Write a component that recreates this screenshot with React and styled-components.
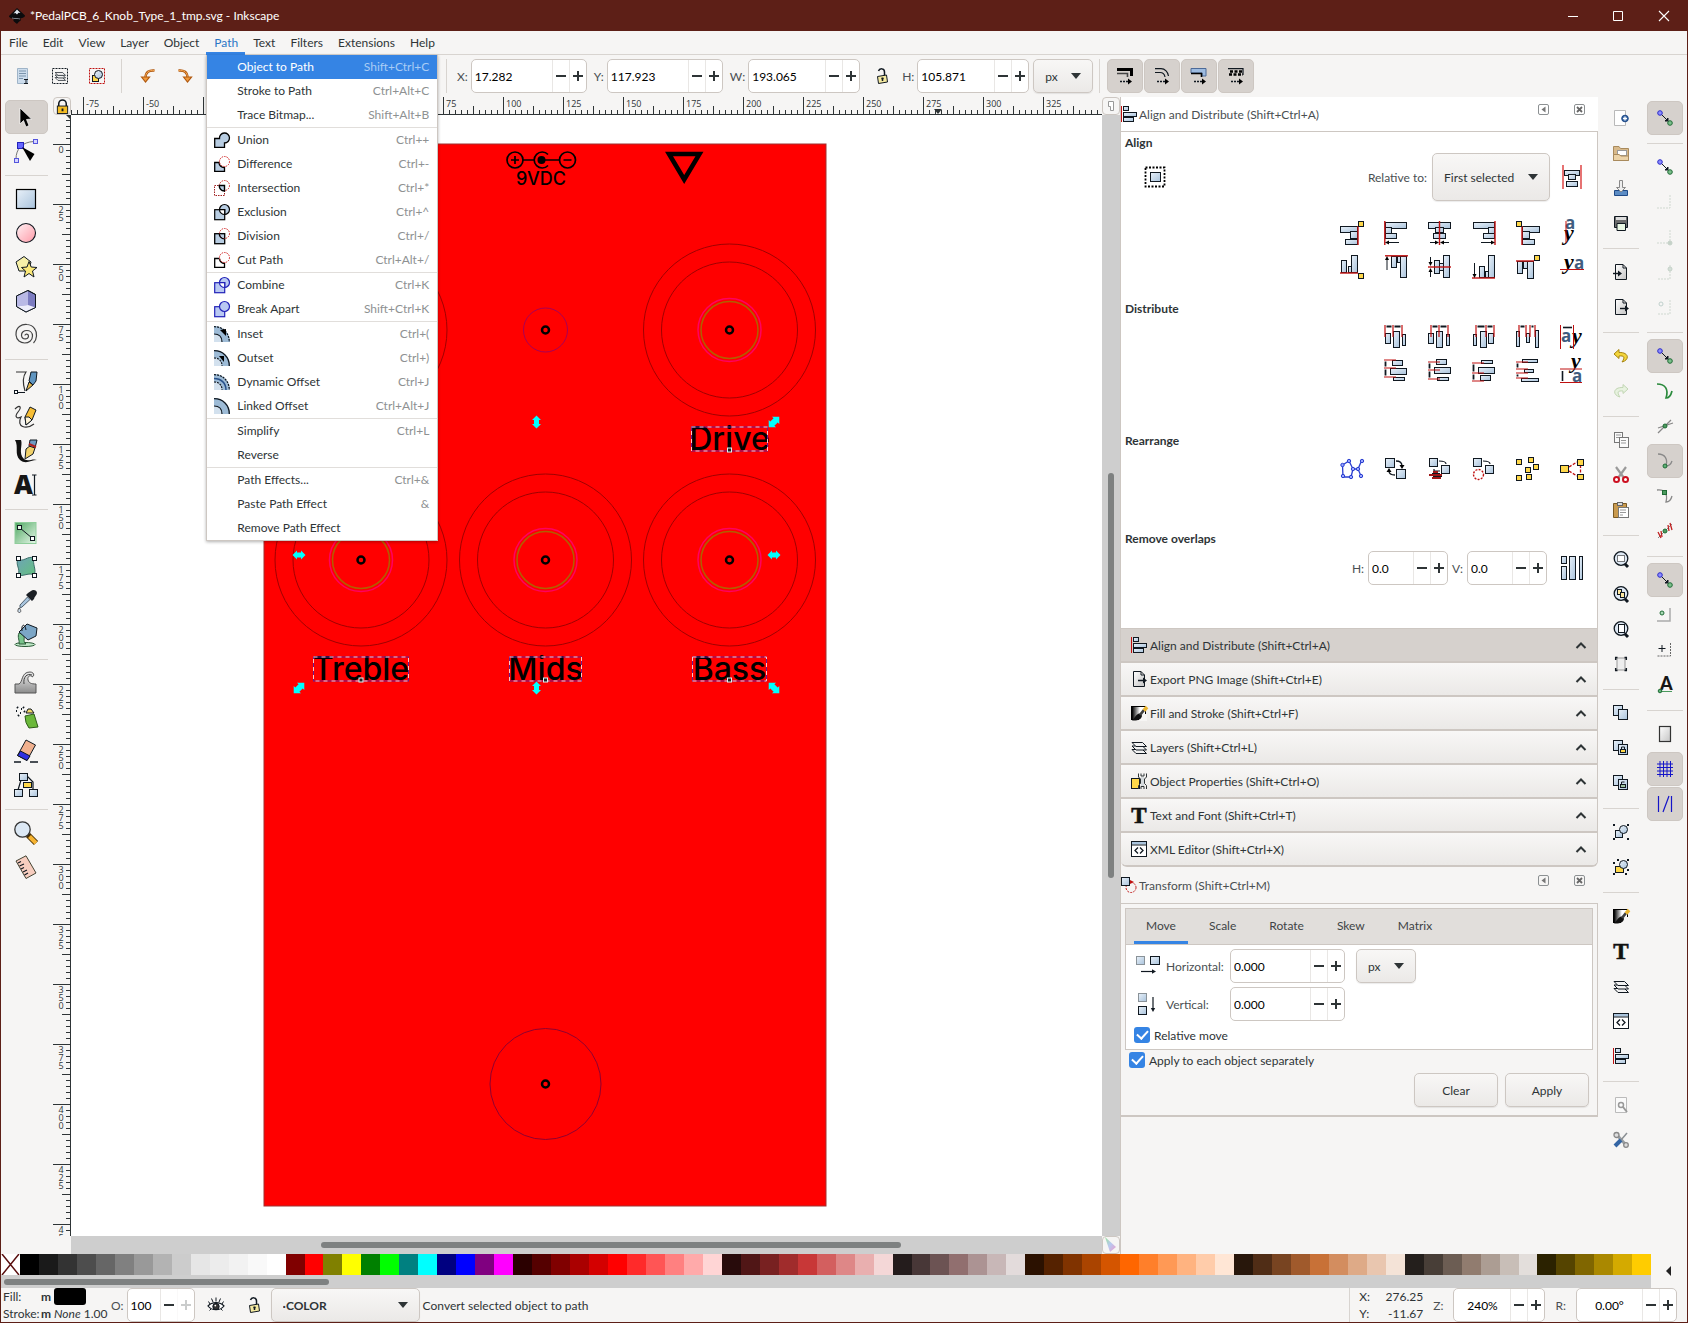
import React from "react";
import styled, { createGlobalStyle, css } from "styled-components";

const c = {
  frame: "#5d1f17",
  bg: "#f6f5f4",
  line: "#d8d4d0",
  edge: "#cdc7c2",
  text: "#2e3436",
  pressed: "#d6d1cd",
  trough: "#cecece",
  thumb: "#7e8181",
  accent: "#3584e4",
};

const Global = createGlobalStyle`
  * { box-sizing: border-box; }
  body { margin: 0; background: ${c.bg}; }
  body, button, input, select {
    font-family: Lato, "Open Sans", sans-serif;
    font-size: 12px;
    color: ${c.text};
  }
  button, input, select { margin: 0; }
  button { padding: 0; border: 0; background: none; }
  svg { display: block; flex: none; }
`;

/* ---------- drawing helpers ---------- */

const INK = "#101820";
const RED = "#c01010";
const BLUE = "#b8cde2";
const YEL = "#ffd84a";

const R = ({ x, y, w, h, f = "url(#blue)", s = INK, sw = 1 }) => (
  <rect x={x + 0.5} y={y + 0.5} width={w - 1} height={h - 1} fill={f} stroke={s} strokeWidth={sw} />
);
const P = ({ d, s = INK, f = "none", w = 1, ...rest }) => (
  <path d={d} stroke={s} fill={f} strokeWidth={w} {...rest} />
);
const C = ({ x, y, r, f = "none", s = INK, w = 1, ...rest }) => (
  <circle cx={x} cy={y} r={r} fill={f} stroke={s} strokeWidth={w} {...rest} />
);

const Defs = () => (
  <HiddenDefs width="0" height="0" aria-hidden="true">
    <defs>
      <linearGradient id="blue" x1="0" y1="0" x2="1" y2="1">
        <stop offset="0" stopColor="#e9f1f9" />
        <stop offset="1" stopColor="#a9c3dc" />
      </linearGradient>
      <linearGradient id="pink" x1="0" y1="0" x2="1" y2="1">
        <stop offset="0" stopColor="#fff2f4" />
        <stop offset="1" stopColor="#ff9aa8" />
      </linearGradient>
      <linearGradient id="green" x1="0" y1="0" x2="1" y2="1">
        <stop offset="0" stopColor="#4fa862" />
        <stop offset="1" stopColor="#e8f8ea" />
      </linearGradient>
      <linearGradient id="grey" x1="0" y1="0" x2="1" y2="1">
        <stop offset="0" stopColor="#ffffff" />
        <stop offset="1" stopColor="#c4c4c4" />
      </linearGradient>
      <linearGradient id="dark" x1="0" y1="0" x2="0" y2="1">
        <stop offset="0" stopColor="#ededed" />
        <stop offset="1" stopColor="#8c8c8c" />
      </linearGradient>
      <linearGradient id="ink" x1="0" y1="0" x2="1" y2="0">
        <stop offset="0.05" stopColor="#000000" />
        <stop offset="0.6" stopColor="#ffffff" />
      </linearGradient>
      <linearGradient id="mesh" x1="0" y1="0" x2="1" y2="1">
        <stop offset="0" stopColor="#6fa3b8" />
        <stop offset="1" stopColor="#63c07f" />
      </linearGradient>
      <linearGradient id="gamut" x1="0" y1="0" x2="1" y2="1">
        <stop offset="0" stopColor="#9be29b" />
        <stop offset="0.5" stopColor="#b9c8f0" />
        <stop offset="1" stopColor="#f09ac8" />
      </linearGradient>
    </defs>
  </HiddenDefs>
);

const HiddenDefs = styled.svg`
  position: absolute;
`;

const snapNodes = (
  <>
    <P d="M4 4 L12 12" />
    <P d="M11 8 V11 H8 Z" f={INK} />
    <C x={3} y={3} r={2.3} f="#8d8dff" s="#2a2ac8" />
    <C x={13} y={13} r={2.3} f="#7cc08c" s="#1f6b35" />
  </>
);
const page = <P d="M2.5 .5 H10 L13.5 4 V15.5 H2.5 Z M10 .5 V4 H13.5" f="url(#grey)" />;
const pageSmall = (x, y, f = "url(#blue)") => <R x={x} y={y} w={10} h={11} f={f} />;
const magnifier = (
  <>
    <P d="M11 12 L15 16" w={3} />
    <C x={8} y={7.5} r={6.8} f="#dfe9f4" w={1.3} />
  </>
);
const fillStroke = (
  <>
    <rect x=".5" y="1.500" width="14" height="13" fill="url(#ink)" stroke="#000" />
    <rect x="8" y="9" width="8" height="7" fill="#f6f5f4" />
    <P d="M1 15.500 C4 13 5 9 8.500 8.500 L11 10.500 C11 14 7 16 1 15.500 Z" s="none" f="#111" />
    <P d="M9 10 L13 5" w={2.800} s="#3f3f3f" />
    <P d="M13 5.500 L16 2" w={3.500} s="#eab530" />
  </>
);
const layers = (
  <>
    <P d="M1 10.5 L5 14.5 H15.5 L11.5 10.5 Z" f="#f2f2f2" />
    <P d="M1 7 L5 11 H15.5 L11.5 7 Z" f="#f2f2f2" />
    <P d="M1 3.5 L5 7.5 H15.5 L11.5 3.5 Z" f="#f2f2f2" />
  </>
);
const xml = (
  <>
    <R x={0} y={0} w={16} h={16} f="#fff" />
    <rect x={1} y={1} width={14} height={2.5} fill="#a9c3dc" />
    <P d="M0 4 H16" />
    <P d="M7 6.5 L4 9.5 L7 12.5 M9 6.5 L12 9.5 L9 12.5" w={1.3} />
  </>
);
const letterT = (
  <text x="8" y="15.5" textAnchor="middle" fontFamily="Liberation Serif, serif" fontWeight="700" fontSize="23" fill="#111" stroke="#111" strokeWidth=".6">T</text>
);
const alignLeft = (
  <>
    <P d="M.5 0 V16" s={RED} />
    <R x={2} y={0} w={6} h={5} />
    <R x={2} y={6} w={14} h={5} />
    <R x={2} y={11} w={11} h={5} />
  </>
);
const transform = (
  <>
    <C x={10} y={10.5} r={5} s={RED} strokeDasharray="2 1.2" />
    <R x={0} y={0} w={9} h={9} />
    <P d="M9 3 L13 5 L9 7 Z" s="none" f={RED} />
  </>
);
const exportPage = (
  <>
    {page}
    <P d="M7 9.5 H13" w={1.4} />
    <P d="M12 6.5 L16 9.5 L12 12.5 Z" f={INK} s="none" />
  </>
);
const circleDots = { s: "#d02020", strokeDasharray: "1.5 1" };
const quarter = (inner, dash) => (
  <>
    <P d="M0 0 C9 0 16 7 16 16 H8 C8 11 5 8 0 8 Z" s="none" f="#9dbbd6" />
    <P d="M0 8 C5 8 8 11 8 16 H0 Z" s="none" f="#d3e1ee" />
    <P d="M0 .7 C9 .7 15.3 7 15.3 16" w={1.3} {...(dash ? { strokeDasharray: "2 1" } : {})} />
    <P d="M0 8 C5 8 8 11 8 16" w={1.2} {...(inner ? { strokeDasharray: "2 1" } : {})} />
  </>
);

/* name: [viewBox size, drawing] */
const icons = {
  logo: [16, <><P d="M8 0 L16 7.5 C16 10 12 9.5 11 11 C14 12 10 13 8 16 C6 14 3 13 5 11.5 C3 10 0 10 0 8 Z" s="none" f="#0b0b0d" /><P d="M8 1.5 L11.5 5 L9.5 4.8 L8 6.5 L6.5 5 L4.5 5.5 Z" s="none" f="#dfe6ee" /><P d="M3 10 C5 11 9 10 11 11" s="#7a8088" /></>],
  min: [10, <P d="M0 5.5 H10" s="#fff" />],
  max: [10, <P d="M.5 .5 H9.5 V9.5 H.5 Z" s="#fff" />],
  close: [10, <P d="M0 0 L10 10 M10 0 L0 10" s="#fff" w={1.1} />],

  selectAll: [16, <><P d="M2.5 .5 H12.5 V15.5 H2.5 Z" f="#cddded" s="#9fb4c8" /><P d="M4 3 H11 M4 5.5 H11 M4 8 H11 M4 10.5 H8" s="#7b94ac" /><P d="M9 11.5 H13 M11 11.5 V16 M9 15.5 H13" /></>],
  selectLayers: [16, <><rect x=".5" y=".5" width="15" height="15" fill="none" stroke={INK} strokeDasharray="2 1" /><g transform="translate(2.4 2) scale(.72)">{layers}</g></>],
  deselect: [16, <><rect x=".5" y=".5" width="15" height="15" fill="none" stroke={RED} strokeDasharray="2 1" /><R x={3} y={7} w={7} h={7} f={YEL} /><C x={9.5} y={6.5} r={4} f="url(#blue)" /></>],
  undoTop: [16, <><P d="M14.500 2.500 C9 2 5.500 4 5.500 10" s="#b0580e" w={2.400} /><P d="M14.500 2.500 C9 2 5.500 4 5.500 10" s="#f3a654" /><P d="M1.500 9 L5.500 14 L9.500 9 Z" s="#b0580e" f="#f19a3c" w={1.200} /></>],
  redoTop: [16, <><P d="M1.500 2.500 C7 2 10.500 4 10.500 10" s="#b0580e" w={2.400} /><P d="M1.500 2.500 C7 2 10.500 4 10.500 10" s="#f3a654" /><P d="M6.500 9 L10.500 14 L14.500 9 Z" s="#b0580e" f="#f19a3c" w={1.200} /></>],
  lockOpen: [16, <><P d="M4.500 3 C5.500 0 10.500 0 10.500 4 V8" w={1.500} /><P d="M3.500 8.500 L12.500 7 L13.500 14 L4.500 15.500 Z" f="#f4e9a0" /><P d="M8.500 9.500 V13 M7.300 10.500 H9.700" w={1.500} /></>],
  lockShut: [16, <><P d="M4 8 V5 a4 4 0 0 1 8 0 V8" w={1.600} /><R x={2} y={7} w={12} h={9} f="#f5bd24" /><P d="M8 10 V13" w={2} /></>],
  scaleStroke: [16, <><P d="M0 1.5 H14.5 V8" w={3} s="#000" /><P d="M0 5.5 H10.5 V9" w={1.6} s="#444" /><P d="M3 13.5 H12" strokeDasharray="2 1" w={1.4} /><P d="M11 10.5 L15 13.5 L11 16.5 Z" f="#000" s="none" /></>],
  scaleCorner: [16, <><P d="M1 .7 H7 C11 .7 14 4 14.5 8" w={1.2} /><P d="M1 4.5 H6 C8.5 4.5 10.5 6 11 9" w={1.2} /><P d="M3 13.5 H12" strokeDasharray="2 1" w={1.4} /><P d="M11 10.5 L15 13.5 L11 16.5 Z" f="#000" s="none" /></>],
  scaleGradient: [16, <><P d="M0 .5 H15 V8 H11 V5 H0 Z" f="#9dbbe0" s="#4c6a98" /><P d="M0 5.5 H10.5 V9" w={1.6} s="#000" /><P d="M3 13.5 H12" strokeDasharray="2 1" w={1.4} /><P d="M11 10.5 L15 13.5 L11 16.5 Z" f="#000" s="none" /></>],
  scalePattern: [16, <><P d="M0 .7 H15 V7" w={1.2} /><P d="M2 3.5 H15 M1 6.5 H15" w={2.500} s="#000" strokeDasharray="3 1.5" /><P d="M3 13.5 H12" strokeDasharray="2 1" w={1.4} /><P d="M11 10.5 L15 13.5 L11 16.5 Z" f="#000" s="none" /></>],

  selector: [24, <P d="M6 3 V19 L9.5 15.5 L12 22 L15 20.5 L12.5 14.5 L17.5 14 Z" f="#000" s="#fff" w={0.7} />],
  node: [24, <><P d="M2 20 C2 10 8 3 20 2.5" s="#777" /><R x={0} y={19} w={5} h={5} f="#d5d5ff" s="#5555dd" /><R x={19} y={0} w={5} h={5} f="#d5d5ff" s="#5555dd" /><R x={3} y={3} w={7} h={7} f="#6666ff" s="#2222bb" /><P d="M8 8 L20.500 15 L16 22 Z" f="#000" s="none" /></>],
  rect: [24, <rect x="2.5" y="2.5" width="19" height="19" fill="url(#blue)" stroke="#000" strokeWidth="1.2" />],
  circle: [24, <C x={12} y={12} r={9.5} f="url(#pink)" w={1.1} />],
  star: [24, <><P d="M2 7 L10 1.5 L17 7 L14.5 16 L5 16 Z" f="#f7f0a8" /><P d="M15 6.5 L17.2 12 L23 12.5 L18.5 16 L20 22 L15 18.5 L10 22 L11.5 16 L7.5 12.5 L13 12 Z" f="#fbe878" /></>],
  box3d: [24, <><P d="M2.5 7 L14 1.5 L21.5 5.5 L21.5 18.5 L12 23 L2.5 17.5 Z" f="#7c7cc0" /><P d="M2.5 7 L14 1.5 V16 L2.5 17.5 Z" f="#b9b9e6" s="none" /><P d="M14 16 L21.5 18.5 L12 23 L2.5 17.5 Z" f="#eeeefb" s="none" /><P d="M2.5 7 L14 1.5 L21.5 5.5 L21.5 18.5 L12 23 L2.5 17.5 Z" /></>],
  spiral: [24, <P d="M11 12.500 C11 10.500 14.500 10.500 14.500 13 C14.500 17 8 17 7.500 12.500 C7 6 18.500 5.500 18.500 13 C18.500 22 3 23 2 12 C1.500 4 8 1 13 1.500 C20 2 23 8 22.500 13 C22.300 16 21 18.500 19.500 20" w={1.200} s="#444" />],
  pen: [24, <><P d="M2 1 H12 C9 5 8 10 11 20" w={1.2} s="#333" /><P d="M3 21.500 L11 21.500" /><R x={0} y={19} w={4} h={4} f="#fff" /><P d="M12 20 L15 11 L19 14 Z" f="#e3b64a" /><P d="M15 10 L17 1 L23 1 L22 10 L19 14 Z" f="#5f94bf" /></>],
  pencil: [24, <><P d="M1 4 C6 -1 8 2 4 7 C0 12 3 14 7 12 C2 22 12 25 20 19" w={1.2} s="#333" /><P d="M11 12 L16 2 L22 5 L18 15 L12 20 Z" f="#f6bd35" /><P d="M11 12 L15 12 L18 15 L12 20 Z" f="#fdf3d8" /></>],
  calligraphy: [24, <><P d="M1 1 H7 C9 6 4 14 10 20 C14 23 19 19 23 21 C17 21 12 26 6 21 C0 15 5 8 1 1 Z" f="#111" s="none" /><P d="M11 20 L12 10 L17 6 L21 9 L19 15 Z" f="#f1d16a" /><P d="M15 7 L16 1 H23 L21 9 Z" f="#6f9cc4" /><P d="M15 5 L22 8" s="#b02020" w={2} /></>],
  text: [24, <><text x="0" y="21" fontFamily="Open Sans, sans-serif" fontWeight="800" fontSize="26" fill="#161616">A</text><P d="M18 2 H22.500 M20.500 2 V22 M18 22 H22.500" w={1.2} /></>],
  gradient: [24, <><rect x="1" y="1.500" width="21" height="21" fill="url(#green)" stroke="#8fce9b" /><P d="M6 7 L18 17" /><R x={3} y={4} w={5} h={5} f="#e6f5e6" /><R x={16} y={15} w={5} h={5} f="#fff" /></>],
  mesh: [24, <><P d="M4 4 C9 8 14 0 20 3 C18 9 23 15 20 20 C15 17 9 22 4 20 C7 14 1 10 4 4 Z" f="url(#mesh)" s="#3c6f6a" />{[[2, 1], [18, 1], [2, 18], [18, 18]].map(([x, y]) => <R key={x + "-" + y} x={x} y={y} w={5} h={5} f="#fff" />)}</>],
  dropper: [24, <><P d="M17 2 C19 0 23 1 23 4 C23 6 20 8 20 10 L18 12 L12 6 L14 4 Z" f="#1b1f24" s="none" /><P d="M13.500 8 L16 10.500 L8 18 L6 19 L6 16 Z" f="#a8c4dd" s="#50606e" /><P d="M5 19 C3 22 4 23.500 5.500 23.500 C7 23.500 7.500 21 5 19 Z" f="#cfe0ef" s="#555" /></>],
  bucket: [24, <><ellipse cx="11" cy="21.500" rx="10" ry="2" fill="#bfe9c8" stroke="#2c5a38" /><P d="M5 10 C3 14 6 18 5 21 H12 C8 18 12 14 9 10 Z" f="#79c48c" s="#2c5a38" /><P d="M5 9 L13 1 L23 5 L22 13 L14 17 Z" f="#7ca6c6" /><P d="M8 8 C7 1 11 0 12 7" /></>],
  tweak: [24, <><P d="M1 13 H5 C9 11 7 1 16 1 C20 1 21 5 18 6 C18 4 13 4 14 9 C15 12 17 13 22 13 V22 H1 Z" f="url(#dark)" s="#555" /><P d="M10 13 C9 6 13 2 18 4" s="#444" /></>],
  spray: [24, <><P d="M11 11 L20 9 L24 22 L15 23 Q11 18 11 11 Z" f="#6bb83a" s="#2d5c18" /><P d="M12 8 L14 4 L17 4 L20 8 Z" f="#f1d96a" /><P d="M3 2 L4 3 M7 4 L8 4 M2 6 L3 6 M6 8 L7 8 M9 2 L10 3 M10 6 L11 7 M4 11 L5 10" w={2} /></>],
  eraser: [24, <><P d="M12 1 L21.500 6 L13 21.500 L3.500 16.500 Z" f="#f0b08e" /><P d="M6.500 12 L16 17 L13 21.500 L3.500 16.500 Z" f="#2f2fe0" /><P d="M0 23 H7 M16 23 H24" w={1.3} /></>],
  connector: [24, <><P d="M7 7 L4 17 M13 3 L19 9 V17" w={1.2} /><R x={5} y={0} w={9} h={8} /><R x={0} y={16} w={9} h={8} /><R x={15} y={16} w={9} h={8} /><R x={9} y={9} w={9} h={6} f={YEL} /></>],
  zoom: [24, <><P d="M14 14 L22 22" w={6} s="#4a3000" /><P d="M15.500 15.500 L22 22" w={4} s="#f6b331" /><C x={8.500} y={8.500} r={7.700} f="#dce8f4" s="#333" w={1.300} /></>],
  measure: [24, <><P d="M2 6 L12 .8 L22 18 L12 23.500 Z" f="#f7cdbf" s="#443" /><P d="M4 8 L7 6.500 M5.500 11 L10 9 M7 14 L10 12.500 M9 17 L13 15 M10.500 20 L14 18" w={1.1} /></>],

  union: [16, <P d="M.7 6.500 H5.500 A5 5 0 1 1 10.500 11 V15.300 H.7 Z" f={BLUE} w={1.300} s="#000" />],
  difference: [16, <><P d="M.7 6.500 H5 A5 5 0 0 0 10.500 11.500 V15.300 H.7 Z" f={BLUE} w={1.300} s="#000" /><C x={10.500} y={5.500} r={5} {...circleDots} /></>],
  intersection: [16, <><rect x=".5" y="5.500" width="10" height="10" fill="none" stroke="#a02020" strokeDasharray="1.500 1" /><C x={10.500} y={5.500} r={5} {...circleDots} /><P d="M5.200 5.500 H10.500 V11 C7 11 5.200 8 5.200 5.500 Z" f={BLUE} w={1.400} s="#000" /></>],
  exclusion: [16, <><C x={10.500} y={5.500} r={5} f={BLUE} s="#000" w={1.200} /><rect x=".7" y="5.700" width="10" height="10" fill={BLUE} stroke="#000" strokeWidth="1.200" /><P d="M5.500 5.700 H10.700 V10.500 C8 10.500 5.500 8.500 5.500 5.700 Z" f="#fff" s="#000" w={1.200} /></>],
  division: [16, <><rect x=".7" y="5.700" width="10" height="10" fill={BLUE} stroke="#000" strokeWidth="1.300" /><C x={10.500} y={5.500} r={5} {...circleDots} /><P d="M5.200 5.500 C5.200 8 7 11 10.500 11" w={1.200} s="#000" /></>],
  cutPath: [16, <><P d="M5 6.500 H.7 V15.300 H10.500 V11.500 A5 5 0 0 1 5.500 6.500" f="#fff" w={1.300} s="#000" /><C x={10.500} y={5.500} r={5} {...circleDots} /></>],
  combine: [16, <><C x={10.500} y={5.500} r={5} f="#b9c9f2" s="#2222b8" w={1.200} /><rect x=".7" y="5.700" width="10" height="10" fill="#b9c9f2" stroke="#2222b8" strokeWidth="1.200" /><P d="M5.500 5.700 H10.700 V10.500 C8 10.500 5.500 8.500 5.500 5.700 Z" f="#fff" s="#2222b8" w={1.200} /></>],
  breakApart: [16, <><rect x=".7" y="5.700" width="10" height="10" fill="#b9c9f2" stroke="#2222b8" strokeWidth="1.200" /><C x={10.500} y={5.500} r={5} f="#b9c9f2" s="#2222b8" w={1.200} /></>],
  inset: [16, <>{quarter(false, true)}<P d="M12 3 V10 L6 4 Z" f="#000" s="none" /></>],
  outset: [16, <>{quarter(true, false)}<P d="M10 6 V12 L5 6 Z" f="#000" s="none" /></>],
  dynOffset: [16, <>{quarter(true, true)}<P d="M0 4.500 C7 4.500 12 9 12 16" s="#27508a" w={1.500} /></>],
  linkOffset: [16, quarter(false, false)],

  dockAlign: [16, alignLeft],
  dockExport: [16, exportPage],
  dockFill: [16, fillStroke],
  dockLayers: [16, layers],
  dockObject: [16, <><R x={0} y={5} w={9} h={11} f={YEL} /><P d="M7.500 .5 V4 L9.500 6 V10.500 L7.500 12.500 V16 M15.500 .5 V4 L13.500 6 V10.500 L15.500 12.500 V16 M10 .5 V3 H13 V.5 M10 16 V13.500 H13 V16" f="none" s="#2e3436" /><P d="M11.500 4 V13" s="#d5dadd" w={3} /></>],
  dockText: [16, letterT],
  dockXml: [16, xml],
  dockTransform: [16, transform],
  iconify: [11, <><rect x=".5" y=".5" width="10" height="10" rx="1.500" fill="none" stroke="#8c9092" /><P d="M7.500 2.500 V8.500 L3.500 5.500 Z" f="#777" s="none" /></>],
  dockClose: [11, <><rect x=".5" y=".5" width="10" height="10" rx="1.500" fill="none" stroke="#8c9092" /><P d="M3 3 L8 8 M8 3 L3 8" s="#666" w={1.800} /></>],
  chevron: [12, <P d="M1.500 9 L6 4.500 L10.500 9" s="#2e3436" w={2} />],

  anchorGroup: [24, <><rect x="2.500" y="2.500" width="19" height="19" fill="none" stroke="#000" strokeWidth="1.800" strokeDasharray="2 1.500" /><R x={7} y={7} w={11} h={10} /></>],
  moveGroup: [24, <><P d="M3 0 V24 M21 0 V24" s="#e05050" w={1.600} /><R x={4} y={5} w={16} h={6} /><R x={8} y={9} w={8} h={6} /><R x={6} y={16} w={12} h={6} /></>],
  aRightAnchor: [24, <><R x={0} y={5} w={18} h={7} /><R x={10} y={10} w={8} h={8} /><R x={5} y={18} w={13} h={6} /><P d="M18 5 V24" s={RED} w={1.400} /><R x={18} y={0} w={6} h={6} f={YEL} /></>],
  aLeft: [24, <><R x={1} y={1} w={22} h={7} /><R x={1} y={6} w={7} h={7} /><R x={1} y={12} w={12} h={6} /><P d="M.8 0 V24" s={RED} w={1.400} /><P d="M4 21.500 H15" /><P d="M1 21.500 L5 19.500 V23.500 Z" f="#000" s="none" /></>],
  aCenter: [24, <><R x={0} y={1} w={23} h={7} /><R x={7} y={6} w={9} h={6} /><R x={5} y={12} w={13} h={6} /><P d="M11.500 0 V24" s={RED} w={1.400} /><P d="M2 21.500 H8 M15 21.500 H21" /><P d="M11 21.500 L7 19.500 V23.500 Z M12 21.500 L16 19.500 V23.500 Z" f="#000" s="none" /></>],
  aRight: [24, <><R x={1} y={1} w={22} h={7} /><R x={16} y={6} w={7} h={7} /><R x={11} y={12} w={12} h={6} /><P d="M23 0 V24" s={RED} w={1.400} /><P d="M9 21.500 H20" /><P d="M23 21.500 L19 19.500 V23.500 Z" f="#000" s="none" /></>],
  aLeftAnchor: [24, <><R x={6} y={5} w={18} h={7} /><R x={6} y={10} w={8} h={8} /><R x={6} y={18} w={13} h={6} /><P d="M6 5 V24" s={RED} w={1.400} /><R x={0} y={0} w={6} h={6} f={YEL} /></>],
  aTextV: [24, <><text x="5" y="8" fontSize="17" fontFamily="Open Sans, sans-serif" fontWeight="700" fill="#3f5d80">a</text><text x="4" y="19" fontSize="22" fontFamily="Liberation Serif, serif" fontWeight="700" fontStyle="italic">y</text><P d="M6 0 V22" s={RED} /></>],
  aBottomAnchor: [24, <><R x={1} y={5} w={6} h={13} /><R x={8} y={11} w={6} h={7} /><R x={11} y={0} w={7} h={18} /><P d="M0 18 H18" s={RED} w={1.400} /><R x={18} y={18} w={6} h={6} f={YEL} /></>],
  aTop: [24, <><R x={7} y={1} w={6} h={12} /><R x={13} y={1} w={6} h={7} /><R x={16} y={1} w={7} h={22} /><P d="M1 .8 H24" s={RED} w={1.400} /><P d="M3 4 V15" /><P d="M3 1 L1 5 H5 Z" f="#000" s="none" /></>],
  aMiddle: [24, <><R x={6} y={5} w={6} h={14} /><R x={11} y={8} w={6} h={8} /><R x={15} y={0} w={7} h={23} /><P d="M0 12 H23" s={RED} w={1.400} /><P d="M2.500 2 V8 M2.500 16 V22" /><P d="M2.500 11 L.5 7 H4.500 Z M2.500 13 L.5 17 H4.500 Z" f="#000" s="none" /></>],
  aBottom: [24, <><R x={7} y={11} w={6} h={12} /><R x={13} y={16} w={6} h={7} /><R x={16} y={0} w={7} h={23} /><P d="M0 23 H23" s={RED} w={1.400} /><P d="M2.500 8 V20" /><P d="M2.500 23 L.5 19 H4.500 Z" f="#000" s="none" /></>],
  aTopAnchor: [24, <><R x={1} y={6} w={6} h={13} /><R x={7} y={6} w={6} h={8} /><R x={11} y={6} w={7} h={18} /><P d="M0 6 H18" s={RED} w={1.400} /><R x={18} y={0} w={6} h={6} f={YEL} /></>],
  aTextH: [24, <><text x="4" y="14" fontSize="22" fontFamily="Liberation Serif, serif" fontWeight="700" fontStyle="italic">y</text><text x="14" y="14" fontSize="17" fontFamily="Open Sans, sans-serif" fontWeight="700" fill="#3f5d80">a</text><P d="M0 14.500 H24" s={RED} /></>],
  exchange: [24, <><R x={1} y={1} w={10} h={10} /><R x={12} y={12} w={10} h={10} /><P d="M12 4 C17 4 18 6 18 9 M11 18 C6 18 5 16 5 14" w={1.300} /><P d="M15.500 8 H20.500 L18 12 Z M2.500 15 H7.500 L5 11 Z" f="#000" s="none" /></>],
  exchangeZ: [24, <><R x={1} y={1} w={9} h={9} /><R x={13} y={8} w={9} h={9} /><P d="M11 4 C16 4 18 5 18 7 M12 14 H6 V12" w={1.200} /><P d="M1 18 H14 M5 15 H10 M4 21 H13" s="#a01818" w={2} /><P d="M4 16.500 H12 M5 19.500 H14" /></>],
  exchangeRot: [24, <><R x={1} y={1} w={9} h={9} /><R x={13} y={8} w={9} h={9} /><P d="M11 4 C16 4 18 5 18 7" w={1.200} /><C x={6.500} y={17.500} r={5} s={RED} w={1.400} strokeDasharray="2 1.300" /></>],
  randomize: [24, <>{[[0, 2], [12, 0], [17, 7], [9, 10], [0, 18], [10, 17]].map(([x, y]) => <R key={x + "-" + y} x={x} y={y} w={6} h={6} f={YEL} />)}</>],
  unclump: [24, <><P d="M9 10 L17 5 M9 14 L17 19 M20.500 8 V17" s={RED} w={1.300} strokeDasharray="3 1.500" /><R x={0} y={8} w={9} h={8} f={YEL} /><R x={17} y={2} w={7} h={7} f={YEL} /><R x={17} y={17} w={7} h={6} f={YEL} /></>],
  graphLayout: [24, <><P d="M2.500 8 L9 4 L13 12 L11 20 H3 Z M13 12 H18 L21 5 M18 12 L21 19" s="#2a3fd0" w={1.300} />{[[2.500, 8], [9, 4], [13, 12], [11, 20], [3, 19], [18, 12], [22, 4], [21, 19]].map(([x, y]) => <C key={x + "-" + y} x={x} y={y} r={1.700} f="#9aa6ff" s="#2a3fd0" />)}</>],
  overlaps: [24, <><R x={1} y={0} w={6} h={8} /><R x={1} y={10} w={6} h={14} /><R x={9} y={0} w={7} h={24} /><R x={19} y={0} w={4} h={24} /></>],
  moveH: [24, <><R x={0} y={2} w={9} h={9} s="#8a9298" /><R x={14} y={2} w={10} h={9} /><P d="M5 17.500 H17" w={1.200} /><P d="M16 15.300 L20 17.500 L16 19.700 Z" f={INK} s="none" /></>],
  moveV: [24, <><R x={2} y={1} w={9} h={9} s="#8a9298" /><R x={2} y={14} w={9} h={9} /><P d="M17 5 V18" w={1.200} /><P d="M14.800 16 H19.200 L17 20 Z" f={INK} s="none" /></>],

  docNew: [16, <><P d="M1.500 .5 H12.500 V15.500 H1.500 Z" f="#fff" s="#b9b9b9" /><C x={12} y={8.500} r={3.300} f="#3465a4" s="#204a87" /><P d="M12 6.500 V10.500 M10 8.500 H14" s="#fff" w={1.300} /></>],
  docOpen: [16, <><P d="M.5 1.500 H6 L7.500 3.500 H15.500 V15.500 H.5 Z" f="#d8b98a" s="#a98a5c" /><R x={4} y={5} w={10} h={6} f="#fff" s="#999" /><P d="M.5 9.500 H6 L8 11 H15.500 V15.500 H.5 Z" f="#ecd3a8" s="#a98a5c" /></>],
  docSave: [16, <><P d="M1.500 10.500 H14.500 V15.500 H1.500 Z" f="#5c8cc4" s="#204a87" /><P d="M6.500 .5 H9.500 V7.500 H12.500 L8 12 L3.500 7.500 H6.500 Z" f="#eee" s="#888" /></>],
  docPrint: [16, <><P d="M1.500 1.500 H14.500 V12.500 H1.500 Z" f="#6c6c6c" /><rect x="3" y="2" width="10" height="3" fill="#ddd" /><P d="M4 8.500 H12.500 V15.500 H4 Z" f="#eaf8e4" /></>],
  docImport: [16, <>{page}<P d="M0 9.500 H6" w={1.400} /><P d="M5 6.500 L9 9.500 L5 12.500 Z" f={INK} s="none" /></>],
  docExport: [16, exportPage],
  undo: [16, <P d="M6 1.500 L1 6 L6 10.500 V8 C11 7.500 12.500 9 9 14 C17 12 16 4 6 4.500 Z" f="#f3d53c" s="#a68410" />],
  redo: [16, <P d="M10 1.500 L15 6 L10 10.500 V8 C5 7.500 3.500 9 7 14 C-1 12 0 4 10 4.500 Z" f="#e7f2df" s="#c2d6b4" />],
  copy: [16, <><R x={1} y={0} w={9} h={11} f="#fafafa" s="#777" /><R x={6} y={5} w={10} h={11} f="#fafafa" s="#777" /><P d="M3 3 H8 M3 5.500 H6 M8 8.500 H13 M8 11 H13" s="#999" /></>],
  cut: [16, <><P d="M3 0 L11 11 M13 0 L5 11" s="#9a9a9a" w={2.200} /><C x={3.500} y={12.500} r={2.500} s="#cc1020" w={2} f="#fff" /><C x={12.500} y={12.500} r={2.500} s="#cc1020" w={2} f="#fff" /></>],
  paste: [16, <><P d="M.5 1.500 H13.500 V15.500 H.5 Z" f="#c99a4e" s="#7a5a24" /><R x={4} y={0} w={6} h={4} f="#ddd" s="#666" /><R x={5} y={5} w={11} h={11} f="#fff" s="#777" /><P d="M7 8 H13 M7 10.500 H13 M7 13 H10" s="#999" /></>],
  zoomSel: [16, <>{magnifier}<rect x="4.500" y="4.500" width="7" height="6" fill="#fff" stroke="#000" strokeDasharray="1 1" /></>],
  zoomDraw: [16, <>{magnifier}<R x={4} y={3} w={5} h={6} f="#ffe9a0" /><R x={7} y={6} w={5} h={6} f="#ffe9a0" /></>],
  zoomPage: [16, <>{magnifier}<R x={5} y={3} w={7} h={9} f="#fff" /></>],
  frame: [16, <><rect x="4" y="2" width="8" height="12" fill="#eee" stroke="#999" /><P d="M2 1.500 H4.500 M11.500 1.500 H14 M2 14.500 H4.500 M11.500 14.500 H14 M2.700 1 V4 M13.300 1 V4 M2.700 12 V15 M13.300 12 V15" w={1.500} /></>],
  duplicate: [16, <>{pageSmall(0, 0)}{pageSmall(5, 4)}</>],
  clone: [16, <>{pageSmall(0, 0)}{pageSmall(5, 4)}<R x={7} y={9} w={6} h={4} f={YEL} /><P d="M8.500 9 V7 H11.500 V9" /></>],
  unlink: [16, <>{pageSmall(0, 0)}{pageSmall(5, 4)}<R x={7} y={9} w={6} h={4} f="#9fc6a2" /><P d="M8.500 9 V7 H11.500" /></>],
  group: [16, <><P d="M0 1 H2 M14 1 H16 M0 15 H2 M14 15 H16" w={2} /><R x={2} y={6} w={8} h={8} /><C x={10.500} y={5.500} r={4} f="url(#blue)" /></>],
  ungroup: [16, <><P d="M0 4 H2 M14 1 H16 M0 15 H2 M12 15 H14 M4 1 H6 M14 11 H16" w={2} /><R x={2} y={7} w={9} h={7} f={YEL} /><C x={10.500} y={5.500} r={4} f="url(#blue)" /></>],
  docProps: [16, <><P d="M2.500 .5 H13.500 V15.500 H2.500 Z" f="#fafafa" s="#bbb" /><C x={8} y={8} r={2.500} s="#999" w={1.500} /><P d="M10 10 L14 15" s="#999" w={2} /></>],
  prefs: [16, <><P d="M3 2 L13 13" s="#9a9fa3" w={3} /><C x={3.500} y={3} r={2.500} s="#888" w={1.300} f="#ddd" /><C x={13} y={13} r={2.300} s="#888" w={1.300} f="#ddd" /><P d="M14 1 L8 8" s="#8a8f93" w={1.500} /><P d="M8 8 L2 14" s="#3465a4" w={4} /></>],

  snap: [16, snapNodes],
  snapBox: [16, <P d="M13 1 V14 H0" s="#cfd8d0" strokeDasharray="2 1" />],
  snapBoxEdge: [16, <><P d="M13 1 V14 H0" s="#cfd8d0" strokeDasharray="2 1" /><C x={13} y={14} r={2} s="#c5d2c8" f="#c5d2c8" /></>],
  snapBoxMid: [16, <><P d="M13 1 V15 H0" s="#cfd8d0" strokeDasharray="2 1" /><C x={13} y={5} r={2} s="#c5d2c8" f="#d5ded8" /></>],
  snapBoxCenter: [16, <><P d="M13 1 V15 H0" s="#cfd8d0" strokeDasharray="2 1" /><C x={4} y={5} r={2} s="#c0d0cc" /></>],
  snapPath: [16, <P d="M0 1 C8 1 12 6 9 15 C12 15 14 12 15 8" s="#2a8a3c" w={1.700} />],
  snapCross: [16, <><P d="M1 15 L14 2 M1 10 L16 5" s="#888" w={1.300} /><C x={8} y={8} r={2} f="#4b9a5e" s="#1f6b35" /></>],
  snapCusp: [16, <><P d="M1 1 C8 1 11 6 9 13 C12 13 14 11 15 8" s="#888" w={1.300} /><C x={8} y={13} r={2} f="#5cb074" s="#1f6b35" /></>],
  snapSmooth: [16, <><P d="M0 2 C8 1 11 6 9 14 C12 14 14 12 15 8" s="#888" w={1.300} /><rect x="5.500" y="2.500" width="4" height="4" fill="#4b9a5e" stroke="#1f6b35" /></>],
  snapMid: [16, <><P d="M1 15 L15 1" s="#888" /><P d="M1 9 L4 15 M4 8 L5 14 M11 2 L12 8 M13 0 L15 7" s="#c02020" w={1.300} /><C x={8} y={8} r={2} f="#4b9a5e" s="#1f6b35" /></>],
  snapObjCenter: [16, <><P d="M13 1 V14 H0" s="#aaa" w={1.500} /><C x={5} y={6} r={2} f="#a8d8b4" s="#1f6b35" /></>],
  snapRot: [16, <><P d="M13.500 1 V14 H0" s="#666" strokeDasharray="2 1" /><P d="M5 3 V10 M1.500 6.500 H8.500" /></>],
  snapText: [16, <><text x="3" y="13" fontWeight="900" fontSize="18" fill="#161616">A</text><P d="M3 14.500 H15" s="#4b9a5e" /><C x={3} y={14} r={1.800} f="#5cb074" s="#1f6b35" /></>],
  snapPage: [16, <rect x="2.500" y=".5" width="11" height="15" fill="url(#grey)" stroke="#333" strokeWidth="1.200" />],
  snapGrid: [16, <P d="M3 0 V16 M6.500 0 V16 M10 0 V16 M13.500 0 V16 M0 3 H16 M0 6.500 H16 M0 10 H16 M0 13.500 H16" s="#1515c8" />],
  snapGuide: [16, <P d="M1.500 0 V16 M14.500 0 V16 M6 16 L12 0" s="#1515c8" w={1.200} />],

  eye: [16, <><P d="M0 9 C4 4.500 12 4.500 16 9 C12 14 4 14 0 9 Z" f="#fff" w={1.200} /><C x={8} y={9.500} r={3.200} f="#333" /><C x={7.300} y={8.600} r={0.900} f="#fff" s="none" /><P d="M8 4.500 V.5 M5 5 L3.500 1.500 M11 5 L12.500 1.500 M2 7 L.5 4.500 M14 7 L15.500 4.500 M3 12 L1.500 13.500 M13 12 L14.500 13.500" /></>],
  handle: [10, <P d="M2.500 .5 H7.500 V9.500 H4.500 V5.500 H2.500 Z" f="#fff" s="#999" />],
  gamut: [16, <P d="M2 0 L13 10 L7 15 Z" f="url(#gamut)" s="none" />],
};

const distribute = (bars, lines) => (
  <>
    {bars.map(([x, y, w, h]) => <R key={x} x={x} y={y} w={w} h={h} />)}
    <P d={lines.map((x) => `M${x} 0 V12`).join(" ")} s={RED} w={1.200} />
    <P d={`M${lines[0] + 1.5} 1.500 H${lines[1] - 1.5} M${lines[lines.length - 2] + 1.5} 1.500 H${lines[lines.length - 1] - 1.5}`} w={1.800} />
  </>
);
const flip = (drawing) => <g transform="matrix(0 1 1 0 0 0)">{drawing}</g>;
const distLeft = distribute([[1, 8, 6, 11], [9, 6, 7, 17], [18, 9, 4, 12]], [1, 9, 18]);
const distMid = distribute([[0, 8, 6, 11], [8, 6, 7, 17], [18, 9, 4, 12]], [3, 11, 20]);
const distRight = distribute([[1, 9, 4, 12], [8, 6, 7, 17], [16, 8, 6, 11]], [4, 14, 22]);
const distGap = distribute([[0, 6, 4, 16], [10, 8, 4, 10], [19, 5, 4, 18]], [3, 10, 14, 19]);
Object.assign(icons, {
  dLeft: [24, distLeft],
  dMid: [24, distMid],
  dRight: [24, distRight],
  dGap: [24, distGap],
  dTop: [24, flip(distLeft)],
  dCenter: [24, flip(distMid)],
  dBottom: [24, flip(distRight)],
  dGapV: [24, flip(distGap)],
  dTextH: [24, <><text x="1" y="17" fontSize="17" fontFamily="Open Sans, sans-serif" fontWeight="700" fill="#3f5d80">a</text><text x="12" y="18" fontSize="22" fontFamily="Liberation Serif, serif" fontWeight="700" fontStyle="italic">y</text><P d="M.5 0 V24 M13.500 0 V24" s={RED} /><P d="M3 2.500 H12" w={1.600} /></>],
  dTextV: [24, <><text x="11" y="9" fontSize="22" fontFamily="Liberation Serif, serif" fontWeight="700" fontStyle="italic">y</text><text x="12" y="23" fontSize="17" fontFamily="Open Sans, sans-serif" fontWeight="700" fill="#3f5d80">a</text><P d="M0 10 H22 M0 23.500 H22" s={RED} /><P d="M2.500 12 V22" w={1.600} /></>],
});

const Icon = ({ name, size }) => {
  const [box, drawing] = icons[name];
  return (
    <svg width={size || box} height={size || box} viewBox={`0 0 ${box} ${box}`} overflow="visible" aria-hidden="true">
      {drawing}
    </svg>
  );
};

/* ---------- shared controls ---------- */

const raised = css`
  border: 1px solid ${c.edge};
  border-radius: 5px;
  background: linear-gradient(#f8f7f6, #ebe9e7);
  box-shadow: 0 1px 1px rgba(0, 0, 0, 0.08);
`;

const IconButton = styled.button`
  display: flex;
  align-items: center;
  justify-content: center;
  flex: none;
  width: ${(p) => p.$w || 36}px;
  height: ${(p) => p.$h || 34}px;
  border-radius: 5px;
  ${(p) => p.$on && css`
    background: ${c.pressed};
    border: 1px solid ${c.edge};
  `}
`;

const SpinBox = styled.div`
  display: flex;
  flex: none;
  height: 34px;
  border: 1px solid ${c.edge};
  border-radius: 5px;
  background: #fff;
  overflow: hidden;
`;
const SpinInput = styled.input`
  width: ${(p) => p.$w}px;
  border: 0;
  padding: 0 3px;
  background: none;
  color: #000;
  text-align: ${(p) => p.$align || "left"};
  outline: none;
`;
const SpinStep = styled.button`
  width: 17px;
  border-left: 1px solid #e9e7e5;
  display: flex;
  align-items: center;
  justify-content: center;
  opacity: ${(p) => (p.disabled ? 0.25 : 1)};
`;

const Spin = ({ id, value, w, align, maxed }) => (
  <SpinBox>
    <SpinInput id={id} defaultValue={value} $w={w} $align={align} />
    <SpinStep aria-label="Decrease">
      <svg width="10" height="10"><P d="M0 5 H10" w={2} s="#2e3436" /></svg>
    </SpinStep>
    <SpinStep aria-label="Increase" disabled={maxed}>
      <svg width="10" height="10"><P d="M0 5 H10 M5 0 V10" w={2} s="#2e3436" /></svg>
    </SpinStep>
  </SpinBox>
);

const ComboBox = styled.div`
  position: relative;
  flex: none;
  width: ${(p) => p.$w}px;
  height: ${(p) => p.$h || 34}px;
  &::after {
    content: "";
    position: absolute;
    right: 12px;
    top: calc(50% - 3px);
    border: 5px solid transparent;
    border-top: 6px solid #2e3436;
    border-bottom: 0;
    pointer-events: none;
  }
`;
const ComboSelect = styled.select`
  appearance: none;
  width: 100%;
  height: 100%;
  padding: 0 11px;
  font-weight: ${(p) => (p.$bold ? 700 : 400)};
  ${raised}
`;
const Combo = ({ id, label, value, w, h, bold }) => (
  <ComboBox $w={w} $h={h}>
    <ComboSelect id={id} aria-label={label} defaultValue={value} $bold={bold}>
      <option>{value}</option>
    </ComboSelect>
  </ComboBox>
);

const FieldLabel = styled.label`
  flex: none;
  color: #4a4f52;
`;

const VSep = styled.div`
  flex: none;
  width: 1px;
  height: 34px;
  margin: 0 7px 0 6px;
  background: ${c.line};
`;
const HSep = styled.div`
  flex: none;
  height: 1px;
  margin: 7px 0 6px;
  width: ${(p) => p.$w}px;
  background: ${c.line};
`;

/* ---------- window frame ---------- */

const Shell = styled.div`
  display: flex;
  flex-direction: column;
  height: 100vh;
  border: solid ${c.frame};
  border-width: 0 1px 1px;
  background: ${c.bg};
  overflow: hidden;
`;
const TitleBar = styled.header`
  display: flex;
  align-items: center;
  flex: none;
  height: 31px;
  padding-left: 8px;
  gap: 5px;
  background: ${c.frame};
  color: #fff;
`;
const TitleText = styled.h1`
  flex: 1;
  margin: 0;
  font-size: 12px;
  font-weight: 400;
`;
const WindowButtons = styled.div`
  display: flex;
`;
const MenuBar = styled.nav`
  display: flex;
  flex: none;
  height: 24px;
  border-bottom: 1px solid ${c.line};
`;
const MenuEntry = styled.div`
  position: relative;
`;
const MenuTitle = styled.button`
  height: 24px;
  padding: 2px 7px 0 8px;
  border-bottom: 3px solid ${(p) => (p.$open ? c.accent : "transparent")};
  color: ${(p) => (p.$open ? "#2a76c6" : c.text)};
`;
const Popup = styled.div`
  position: absolute;
  z-index: 5;
  top: 24px;
  left: 0;
  width: 232px;
  background: #fff;
  border: solid ${c.edge};
  border-width: 0 1px 1px;
  box-shadow: 0 1px 3px rgba(0, 0, 0, 0.3);
`;
const PopupRow = styled.button`
  display: flex;
  align-items: center;
  width: 100%;
  height: 24px;
  padding: 0 8px 1px 7px;
  text-align: left;
  background: ${(p) => (p.$active ? c.accent : "none")};
  color: ${(p) => (p.$active ? "#fff" : c.text)};
`;
const PopupIcon = styled.span`
  width: 23px;
`;
const Shortcut = styled.kbd`
  margin-left: auto;
  font: inherit;
  color: ${(p) => (p.$active ? "#a9ccf5" : "#8e9192")};
`;
const PopupSep = styled.div`
  height: 1px;
  background: #e1dedb;
`;

const pathMenu = [
  [[null, "Object to Path", "Shift+Ctrl+C"], [null, "Stroke to Path", "Ctrl+Alt+C"], [null, "Trace Bitmap...", "Shift+Alt+B"]],
  [["union", "Union", "Ctrl++"], ["difference", "Difference", "Ctrl+-"], ["intersection", "Intersection", "Ctrl+*"], ["exclusion", "Exclusion", "Ctrl+^"], ["division", "Division", "Ctrl+/"], ["cutPath", "Cut Path", "Ctrl+Alt+/"]],
  [["combine", "Combine", "Ctrl+K"], ["breakApart", "Break Apart", "Shift+Ctrl+K"]],
  [["inset", "Inset", "Ctrl+("], ["outset", "Outset", "Ctrl+)"], ["dynOffset", "Dynamic Offset", "Ctrl+J"], ["linkOffset", "Linked Offset", "Ctrl+Alt+J"]],
  [[null, "Simplify", "Ctrl+L"], [null, "Reverse", ""]],
  [[null, "Path Effects...", "Ctrl+&"], [null, "Paste Path Effect", "&"], [null, "Remove Path Effect", ""]],
];

const PathMenu = () => (
  <Popup role="menu">
    {pathMenu.map((group, g) => (
      <React.Fragment key={g}>
        {g > 0 && <PopupSep />}
        {group.map(([icon, label, keys], i) => {
          const active = g === 0 && i === 0;
          return (
            <PopupRow key={label} role="menuitem" $active={active}>
              <PopupIcon>{icon && <Icon name={icon} />}</PopupIcon>
              {label}
              <Shortcut $active={active}>{keys}</Shortcut>
            </PopupRow>
          );
        })}
      </React.Fragment>
    ))}
  </Popup>
);

/* ---------- tool options ---------- */

const OptionsBar = styled.div`
  display: flex;
  align-items: center;
  flex: none;
  height: 42px;
  padding: 0 3px;
`;
const OptionActions = styled.div`
  display: flex;
  align-items: center;
  flex: none;
  width: 436px;
`;
const Field = styled.div`
  display: flex;
  align-items: center;
  flex: none;
  gap: 3px;
  margin: 0 4px 0 3px;
`;
const Toggles = styled.div`
  display: flex;
  gap: 1px;
`;

/* ---------- middle ---------- */

const Middle = styled.div`
  display: flex;
  flex: 1;
  min-height: 0;
`;
const SideBar = styled.div`
  display: flex;
  flex-direction: column;
  align-items: center;
  flex: none;
  width: ${(p) => p.$w}px;
  padding: ${(p) => p.$top}px 2px 0 0;
  overflow: hidden;
`;
const SideGroup = styled.div`
  display: grid;
  flex: none;
  row-gap: ${(p) => p.$gap}px;
`;
const Editor = styled.div`
  display: grid;
  flex: 1;
  min-width: 0;
  grid-template-columns: 18px minmax(0, 1fr) 18px;
  grid-template-rows: 18px minmax(0, 1fr) 18px;
`;
const CornerButton = styled.button`
  display: flex;
  align-items: center;
  justify-content: center;
  border: 1px solid ${c.edge};
  border-radius: 4px;
  background: ${c.bg};
  overflow: hidden;
`;
const RulerBox = styled.div`
  overflow: hidden;
  min-width: 0;
  min-height: 0;
`;
const CanvasBox = styled.main`
  background: #fff;
  overflow: hidden;
`;
const ScrollTrack = styled.div`
  display: flex;
  flex-direction: ${(p) => (p.$vertical ? "column" : "row")};
  align-items: center;
  background: ${c.trough};
  ${(p) => p.$wide && css`grid-column: 2;`}
`;
const ScrollLead = styled.div`
  flex: ${(p) => p.$grow} 0 0;
`;
const ScrollThumb = styled.div`
  flex: ${(p) => p.$grow} 0 0;
  width: ${(p) => (p.$vertical ? "6px" : "auto")};
  height: ${(p) => (p.$vertical ? "auto" : "6px")};
  border-radius: 3px;
  background: ${c.thumb};
`;
const Scroll = ({ vertical, wide, parts }) => (
  <ScrollTrack $vertical={vertical} $wide={wide}>
    <ScrollLead $grow={parts[0]} />
    <ScrollThumb $grow={parts[1]} $vertical={vertical} />
    <ScrollLead $grow={parts[2]} />
  </ScrollTrack>
);

const range = (from, to) => Array.from({ length: to - from + 1 }, (_, i) => from + i);

/* 60px per 25 units; zero sits at the page origin */
const HRuler = () => (
  <svg width="100%" height="18">
    <rect y="17" width="100%" height="1" fill="#2e3436" />
    <g transform="translate(193 0)" fill="#2e3436" fontFamily="Open Sans, sans-serif">
      {range(-32, 250).map((i) => {
        const h = i % 10 === 0 ? 18 : i % 5 === 0 ? 9 : 5;
        return <rect key={i} x={i * 6 - 1} y={18 - h} width="1" height={h} />;
      })}
      {range(-3, 13).map((i) => (
        <text key={i} x={i * 60 + 2} y="10" fontSize="9">{i * 25}</text>
      ))}
      <path d="M670 12 H678 L674 17 Z" />
    </g>
  </svg>
);
const VRuler = () => (
  <svg width="18" height="100%">
    <rect x="17" width="1" height="100%" fill="#2e3436" />
    <g transform="translate(0 29)" fill="#2e3436" fontFamily="Open Sans, sans-serif">
      {range(-4, 250).map((i) => {
        const w = i % 10 === 0 ? 18 : i % 5 === 0 ? 9 : 5;
        return <rect key={i} x={18 - w} y={i * 6} width={w} height="1" />;
      })}
      {range(0, 18).map((i) => (
        <text key={i} fontSize="9" textAnchor="middle">
          {String(i * 25).split("").map((d, k) => (
            <tspan key={k} x="8" y={i * 60 + 9 + k * 8}>{d}</tspan>
          ))}
        </text>
      ))}
      <path d="M13 -29 H18 V-24 Z" />
    </g>
  </svg>
);

const Knob = ({ x, y }) => (
  <g transform={`translate(${x} ${y})`} fill="none">
    <circle r="86" stroke="#a00000" />
    <circle r="68" stroke="#a00000" />
    <circle r="31.500" stroke="#ff0060" strokeWidth="1.500" />
    <circle r="28.500" stroke="#b06000" strokeWidth="1.500" />
    <circle r="3.500" stroke="#000" strokeWidth="2.500" />
  </g>
);
const Caption = ({ x, y, w, text }) => (
  <g>
    <text x={x} y={y + 23} textAnchor="middle" fontFamily="Inter, sans-serif" fontWeight="500" fontSize="32" fill="#000">{text}</text>
    <rect x={x - w / 2} y={y} width={w} height="24" fill="none" stroke="#6a1a90" />
    <rect x={x - w / 2} y={y} width={w} height="24" fill="none" stroke="#ffc4c4" strokeDasharray="4 4" />
    <rect x={x - 2} y={y + 21} width="4" height="4" fill="#222" stroke="#d8f4f4" />
  </g>
);
const Handle = ({ x, y, a = 0 }) => (
  <path transform={`translate(${x} ${y}) rotate(${a}) scale(${a % 90 ? 1.15 : 1})`} d="M-6.500 0 L-2 -4.500 V-2.500 H2 V-4.500 L6.500 0 L2 4.500 V2.500 H-2 V4.500 Z" fill="#00ffff" />
);

const Canvas = () => (
  <svg width="100%" height="100%">
    <g transform="translate(193 29)">
      <rect x="0" y="0" width="562" height="1062" fill="#ff0000" stroke="#a03030" />
      {[[97, 186], [465.500, 186], [97, 416], [281.500, 416], [465.500, 416]].map(([x, y]) => (
        <Knob key={x + "-" + y} x={x} y={y} />
      ))}
      <g fill="none" stroke="#000">
        <circle cx="281.500" cy="186" r="22" stroke="#a80058" />
        <circle cx="281.500" cy="186" r="3.500" strokeWidth="2.500" />
        <circle cx="281.500" cy="940" r="55.500" stroke="#900030" />
        <circle cx="281.500" cy="940" r="3.500" strokeWidth="2.500" />
        <g strokeWidth="1.700">
          <circle cx="251" cy="16" r="8" />
          <circle cx="303.500" cy="16" r="8" />
          <path d="M284 10.500 A8 8 0 1 0 284 21.500 M259 16 H269.500 M278 16 H295.500 M247 16 H255 M251 12 V20 M299.500 16 H307.500" />
        </g>
        <path d="M405 10 H435.500 L420.200 35.500 Z" strokeWidth="4.500" />
      </g>
      <circle cx="277.500" cy="16" r="4" />
      <text x="277" y="41" textAnchor="middle" fontFamily="Inter, sans-serif" fontWeight="500" fontSize="18">9VDC</text>
      <Caption x={465.500} y={283} w={76} text="Drive" />
      <Caption x={97} y={513} w={95} text="Treble" />
      <Caption x={281.500} y={513} w={72} text="Mids" />
      <Caption x={465.500} y={513} w={74} text="Bass" />
      <Handle x={272.500} y={278} a={90} />
      <Handle x={510} y={278} a={-45} />
      <Handle x={35} y={411} />
      <Handle x={510} y={411} />
      <Handle x={35} y={544} a={-45} />
      <Handle x={272.500} y={544} a={90} />
      <Handle x={510} y={544} a={45} />
    </g>
  </svg>
);

/* ---------- dock ---------- */

const Dock = styled.aside`
  flex: none;
  width: 478px;
  border-left: 1px solid ${c.edge};
`;
const DockHeader = styled.div`
  display: flex;
  align-items: center;
  height: ${(p) => (p.$white ? 34 : 36)}px;
  gap: 2px;
  background: ${(p) => (p.$white ? "#fff" : c.bg)};
`;
const DockTitle = styled.h2`
  flex: 1;
  margin: 0;
  font-size: 12px;
  font-weight: 400;
  color: #4a4f52;
`;
const DockControls = styled.div`
  display: flex;
  gap: 25px;
  padding: 0 13px 9px 0;
`;
const AlignPanel = styled.section`
  padding: 1px 13px 0 4px;
  height: 498px;
  border: solid ${c.edge};
  border-width: 1px 1px 1px 0;
  background: #fff;
`;
const Heading = styled.h3`
  margin: 0;
  height: 20px;
  line-height: 20px;
  font-size: 12px;
  font-weight: 700;
`;
const RelativeRow = styled.div`
  display: flex;
  align-items: center;
  height: 48px;
  gap: 5px;
  & > :last-child { margin-left: 5px; }
`;
const Grow = styled.div`
  flex: 1;
`;
const ButtonGrid = styled.div`
  display: grid;
  justify-content: end;
  grid-template-columns: repeat(${(p) => p.$cols}, 24px);
  grid-auto-rows: 34px;
  column-gap: 20px;
  margin: ${(p) => p.$top}px 0 ${(p) => p.$bottom}px;
`;
const OverlapRow = styled.div`
  display: flex;
  align-items: center;
  justify-content: flex-end;
  gap: 4px;
  padding-top: 2px;
  & > :last-child { margin-left: 9px; }
`;
const DockList = styled.div`
  border-right: 1px solid ${c.edge};
  border-bottom: 2px solid ${c.edge};
  border-radius: 0 0 6px 6px;
  overflow: hidden;
`;
const DockRow = styled.button`
  display: flex;
  align-items: center;
  gap: 3px;
  width: 100%;
  height: 34px;
  padding: 0 10px;
  border-bottom: 2px solid ${c.edge};
  background: ${(p) => (p.$on ? c.pressed : "linear-gradient(#f8f7f6, #ebe9e7)")};
  &:last-child { height: 32px; border-bottom: 0; }
  & > :last-child { margin-left: auto; }
`;
const TransformFrame = styled.section`
  padding: 4px 4px 8px;
  border: solid ${c.edge};
  border-width: 1px 1px 2px 0;
`;
const Notebook = styled.div`
  border: 1px solid ${c.edge};
  background: #fff;
`;
const Tabs = styled.div`
  display: flex;
  height: 36px;
  padding: 0 8px;
  gap: 9px;
  border-bottom: 1px solid ${c.edge};
  background: #e1dedb;
`;
const Tab = styled.button`
  padding: 0 12px;
  color: #3f4446;
  border-bottom: 3px solid ${(p) => (p.$on ? c.accent : "transparent")};
`;
const MoveForm = styled.div`
  display: grid;
  justify-content: start;
  justify-items: start;
  align-items: center;
  grid-template-columns: 24px 58px 120px auto;
  gap: 4px 6px;
  padding: 4px 10px 0;
`;
const CheckLine = styled.label`
  display: flex;
  align-items: center;
  gap: 4px;
  height: ${(p) => p.$h}px;
  padding-left: ${(p) => p.$left}px;
`;
const CheckInput = styled.input`
  appearance: none;
  display: grid;
  place-items: center;
  width: 16px;
  height: 16px;
  margin: 0;
  border-radius: 3px;
  background: ${c.accent};
  &::after {
    content: "";
    width: 5px;
    height: 9px;
    margin-bottom: 3px;
    border: solid #fff;
    border-width: 0 2px 2px 0;
    transform: rotate(42deg);
  }
`;
const Actions = styled.div`
  display: flex;
  justify-content: flex-end;
  gap: 7px;
  padding: 3px 4px 0 0;
`;
const PushButton = styled.button`
  width: 84px;
  height: 34px;
  ${raised}
`;

const DockHead = ({ icon, title, white }) => (
  <DockHeader $white={white}>
    <Icon name={icon} />
    <DockTitle>{title}</DockTitle>
    <DockControls>
      <button aria-label="Iconify"><Icon name="iconify" /></button>
      <button aria-label="Close panel"><Icon name="dockClose" /></button>
    </DockControls>
  </DockHeader>
);
const IconGrid = ({ names, cols, top, bottom }) => (
  <ButtonGrid $cols={cols} $top={top} $bottom={bottom}>
    {names.map((n) => (
      <IconButton key={n} $w={24} aria-label={n}><Icon name={n} /></IconButton>
    ))}
  </ButtonGrid>
);

const panels = [
  ["dockAlign", "Align and Distribute (Shift+Ctrl+A)"],
  ["dockExport", "Export PNG Image (Shift+Ctrl+E)"],
  ["dockFill", "Fill and Stroke (Shift+Ctrl+F)"],
  ["dockLayers", "Layers (Shift+Ctrl+L)"],
  ["dockObject", "Object Properties (Shift+Ctrl+O)"],
  ["dockText", "Text and Font (Shift+Ctrl+T)"],
  ["dockXml", "XML Editor (Shift+Ctrl+X)"],
];

const DockPane = () => (
  <Dock>
    <DockHead white icon="dockAlign" title="Align and Distribute (Shift+Ctrl+A)" />
    <AlignPanel>
      <Heading>Align</Heading>
      <RelativeRow>
        <IconButton $w={60} aria-label="Treat selection as group"><Icon name="anchorGroup" /></IconButton>
        <Grow />
        <FieldLabel htmlFor="relative">Relative to:</FieldLabel>
        <Combo id="relative" value="First selected" w={118} h={48} />
        <IconButton $w={24} aria-label="Move as group"><Icon name="moveGroup" /></IconButton>
      </RelativeRow>
      <IconGrid cols={6} top={15} bottom={15} names={["aRightAnchor", "aLeft", "aCenter", "aRight", "aLeftAnchor", "aTextV", "aBottomAnchor", "aTop", "aMiddle", "aBottom", "aTopAnchor", "aTextH"]} />
      <Heading>Distribute</Heading>
      <IconGrid cols={5} top={1} bottom={43} names={["dLeft", "dMid", "dRight", "dGap", "dTextH", "dTop", "dCenter", "dBottom", "dGapV", "dTextV"]} />
      <Heading>Rearrange</Heading>
      <IconGrid cols={6} top={1} bottom={43} names={["graphLayout", "exchange", "exchangeZ", "exchangeRot", "randomize", "unclump"]} />
      <Heading>Remove overlaps</Heading>
      <OverlapRow>
        <FieldLabel htmlFor="gapH">H:</FieldLabel>
        <Spin id="gapH" value="0.0" w={44} />
        <FieldLabel htmlFor="gapV">V:</FieldLabel>
        <Spin id="gapV" value="0.0" w={44} />
        <IconButton $w={24} aria-label="Remove overlaps"><Icon name="overlaps" /></IconButton>
      </OverlapRow>
    </AlignPanel>
    <DockList>
      {panels.map(([icon, title], i) => (
        <DockRow key={icon} $on={i === 0}>
          <Icon name={icon} />
          {title}
          <Icon name="chevron" />
        </DockRow>
      ))}
    </DockList>
    <DockHead icon="dockTransform" title="Transform (Shift+Ctrl+M)" />
    <TransformFrame>
      <Notebook>
        <Tabs role="tablist">
          {["Move", "Scale", "Rotate", "Skew", "Matrix"].map((t, i) => (
            <Tab key={t} role="tab" $on={i === 0}>{t}</Tab>
          ))}
        </Tabs>
        <MoveForm>
          <Icon name="moveH" />
          <FieldLabel htmlFor="moveX">Horizontal:</FieldLabel>
          <Spin id="moveX" value="0.000" w={79} />
          <Combo label="Unit" value="px" w={60} />
          <Icon name="moveV" />
          <FieldLabel htmlFor="moveY">Vertical:</FieldLabel>
          <Spin id="moveY" value="0.000" w={79} />
        </MoveForm>
        <CheckLine $h={28} $left={8}>
          <CheckInput type="checkbox" defaultChecked />
          Relative move
        </CheckLine>
      </Notebook>
      <CheckLine $h={20} $left={4}>
        <CheckInput type="checkbox" defaultChecked />
        Apply to each object separately
      </CheckLine>
      <Actions>
        <PushButton>Clear</PushButton>
        <PushButton>Apply</PushButton>
      </Actions>
    </TransformFrame>
  </Dock>
);

/* ---------- side bars ---------- */

const tools = [["selector", "node"], ["rect", "circle", "star", "box3d", "spiral"], ["pen", "pencil", "calligraphy", "text"], ["gradient", "mesh", "dropper", "bucket"], ["tweak", "spray", "eraser", "connector"], ["zoom", "measure"]];
const commands = [["docNew", "docOpen", "docSave", "docPrint"], ["docImport", "docExport"], ["undo", "redo"], ["copy", "cut", "paste"], ["zoomSel", "zoomDraw", "zoomPage", "frame"], ["duplicate", "clone", "unlink"], ["group", "ungroup"], ["dockFill", "dockText", "dockLayers", "dockXml", "dockAlign"], ["docProps", "prefs"]];
const snaps = [["snap*"], ["snap", "snapBox", "snapBoxEdge", "snapBoxMid", "snapBoxCenter"], ["snap*", "snapPath", "snapCross", "snapCusp*", "snapSmooth", "snapMid"], ["snap*", "snapObjCenter", "snapRot", "snapText"], ["snapPage", "snapGrid*", "snapGuide*"]];

const IconColumn = ({ groups, w, top, gap, bw, active }) => (
  <SideBar $w={w} $top={top} role="toolbar">
    {groups.map((names, g) => (
      <React.Fragment key={g}>
        {g > 0 && <HSep $w={bw} />}
        <SideGroup $gap={gap}>
          {names.map((n, i) => (
            <IconButton key={i} $w={bw} $on={n.endsWith("*") || n === active} aria-label={n.replace("*", "")}>
              <Icon name={n.replace("*", "")} />
            </IconButton>
          ))}
        </SideGroup>
        {gap > 0 && <Rule />}
      </React.Fragment>
    ))}
  </SideBar>
);
const Rule = styled.div`
  flex: none;
  height: 1px;
`;

/* ---------- palette and status ---------- */

const swatches = (
  "000000 1a1a1a 333333 4d4d4d 666666 808080 999999 b3b3b3 cccccc e6e6e6 ececec f2f2f2 f9f9f9 ffffff " +
  "800000 ff0000 808000 ffff00 008000 00ff00 008080 00ffff 000080 0000ff 800080 ff00ff " +
  "2b0000 550000 800000 aa0000 d40000 ff0000 ff2a2a ff5555 ff8080 ffaaaa ffd5d5 " +
  "280b0b 501616 782121 a02c2c c83737 d35f5f de8787 e9afaf f4d7d7 " +
  "241c1c 483737 6c5353 916f6f ac9393 c8b7b7 e3dbdb " +
  "2b1100 552200 803300 aa4400 d45500 ff6600 ff7f2a ff9955 ffb380 ffccaa ffe6d5 " +
  "28170b 502d16 784421 a05a2c c87137 d38d5f deaa87 e9c6af f4e3d7 " +
  "241f1c 483e37 6c5d53 917c6f ac9d93 c8beb7 e3dedb " +
  "2b2200 554400 806600 aa8800 d4aa00 ffcc00"
).split(" ");

const PaletteBar = styled.div`
  display: flex;
  flex: none;
  height: 34px;
`;
const PaletteMain = styled.div`
  display: grid;
  flex: 1;
  grid-template-rows: 21px 13px;
`;
const SwatchRow = styled.div`
  display: flex;
`;
const Swatch = styled.button`
  flex: 1 1 0;
  background: ${(p) => p.$c};
`;
const PaletteMenu = styled.button`
  display: flex;
  align-items: center;
  justify-content: center;
  width: 36px;
`;
const StatusBar = styled.footer`
  display: flex;
  align-items: center;
  flex: none;
  height: 34px;
  padding-left: 2px;
`;
const StyleGrid = styled.div`
  display: grid;
  align-items: center;
  grid-template-columns: 38px 13px 57px;
  grid-template-rows: 17px 17px;
`;
const FillSwatch = styled.button`
  width: 32px;
  height: 17px;
  border-radius: 3px;
  background: #000;
`;
const StatusText = styled.p`
  flex: 1;
  margin: 0 0 0 3px;
`;
const Coords = styled.dl`
  display: grid;
  grid-template-columns: 22px 42px;
  grid-auto-rows: 17px;
  align-items: center;
  margin: 0 10px 0 2px;
  dt, dd { margin: 0; }
  dd { text-align: right; }
`;
const ZoomField = styled.div`
  display: flex;
  align-items: center;
  gap: 10px;
  margin-right: 10px;
`;
const OpacityField = styled.div`
  display: flex;
  align-items: center;
  gap: 3px;
`;

export default function App() {
  return (
    <Shell>
      <Global />
      <Defs />
      <TitleBar>
        <Icon name="logo" />
        <TitleText>*PedalPCB_6_Knob_Type_1_tmp.svg - Inkscape</TitleText>
        <WindowButtons>
          <IconButton $w={45} $h={30} aria-label="Minimize"><Icon name="min" /></IconButton>
          <IconButton $w={45} $h={30} aria-label="Maximize"><Icon name="max" /></IconButton>
          <IconButton $w={47} $h={30} aria-label="Close"><Icon name="close" /></IconButton>
        </WindowButtons>
      </TitleBar>
      <MenuBar>
        {["File", "Edit", "View", "Layer", "Object", "Path", "Text", "Filters", "Extensions", "Help"].map((m) => (
          <MenuEntry key={m}>
            <MenuTitle $open={m === "Path"}>{m}</MenuTitle>
            {m === "Path" && <PathMenu />}
          </MenuEntry>
        ))}
      </MenuBar>

      <OptionsBar>
        <OptionActions>
          <IconButton $w={37} aria-label="Select all"><Icon name="selectAll" /></IconButton>
          <IconButton $w={37} aria-label="Select all in layers"><Icon name="selectLayers" /></IconButton>
          <IconButton $w={37} aria-label="Deselect"><Icon name="deselect" /></IconButton>
          <VSep />
          <IconButton $w={37} aria-label="Rotate left"><Icon name="undoTop" /></IconButton>
          <IconButton $w={37} aria-label="Rotate right"><Icon name="redoTop" /></IconButton>
        </OptionActions>
        <VSep />
        <Field><FieldLabel htmlFor="posX">X:</FieldLabel><Spin id="posX" value="17.282" w={80} /></Field>
        <Field><FieldLabel htmlFor="posY">Y:</FieldLabel><Spin id="posY" value="117.923" w={80} /></Field>
        <Field><FieldLabel htmlFor="sizeW">W:</FieldLabel><Spin id="sizeW" value="193.065" w={76} /></Field>
        <IconButton $w={35} aria-label="Lock ratio"><Icon name="lockOpen" /></IconButton>
        <Field><FieldLabel htmlFor="sizeH">H:</FieldLabel><Spin id="sizeH" value="105.871" w={76} /></Field>
        <Combo label="Units" value="px" w={60} />
        <VSep />
        <Toggles>
          {["scaleStroke", "scaleCorner", "scaleGradient", "scalePattern"].map((n) => (
            <IconButton key={n} $on aria-label={n}><Icon name={n} /></IconButton>
          ))}
        </Toggles>
      </OptionsBar>

      <Middle>
        <IconColumn groups={tools} w={52} top={3} gap={0} bw={43} active="selector" />
        <Editor>
          <CornerButton aria-label="Lock guides"><Icon name="lockShut" size={15} /></CornerButton>
          <RulerBox><HRuler /></RulerBox>
          <CornerButton aria-label="Ruler options"><Icon name="handle" /></CornerButton>
          <RulerBox><VRuler /></RulerBox>
          <CanvasBox><Canvas /></CanvasBox>
          <Scroll vertical parts={[358, 405, 358]} />
          <Scroll wide parts={[250, 580, 201]} />
          <CornerButton aria-label="Color management"><Icon name="gamut" /></CornerButton>
        </Editor>
        <DockPane />
        <IconColumn groups={commands} w={47} top={4} gap={1} bw={36} />
        <IconColumn groups={snaps} w={42} top={4} gap={1} bw={36} />
      </Middle>

      <PaletteBar>
        <PaletteMain>
          <SwatchRow>
            <Swatch $c="#fff" aria-label="No color">
              <svg width="100%" height="21" viewBox="0 0 19 21" preserveAspectRatio="none"><P d="M1 0 L18 21 M18 0 L1 21" s="#5a1010" w={1.500} /></svg>
            </Swatch>
            {swatches.map((s, i) => <Swatch key={i} $c={"#" + s} aria-label={"#" + s} />)}
          </SwatchRow>
          <Scroll parts={[3, 325, 1322]} />
        </PaletteMain>
        <PaletteMenu aria-label="Palettes">
          <svg width="6" height="10"><P d="M5 0 V10 L0 5 Z" f="#222" s="none" /></svg>
        </PaletteMenu>
      </PaletteBar>

      <StatusBar>
        <StyleGrid>
          <span>Fill:</span><b>m</b><FillSwatch aria-label="Fill color" />
          <span>Stroke:</span><b>m</b><span><i>None</i> 1.00</span>
        </StyleGrid>
        <OpacityField>
          <FieldLabel htmlFor="opacity">O:</FieldLabel>
          <Spin id="opacity" value="100" w={32} maxed />
        </OpacityField>
        <IconButton $w={43} aria-label="Layer visibility"><Icon name="eye" /></IconButton>
        <IconButton $w={33} aria-label="Layer lock"><Icon name="lockOpen" /></IconButton>
        <Combo label="Layer" value="·COLOR" w={149} bold />
        <StatusText>Convert selected object to path</StatusText>
        <VSep />
        <Coords>
          <dt>X:</dt><dd>276.25</dd>
          <dt>Y:</dt><dd>-11.67</dd>
        </Coords>
        <ZoomField>
          <FieldLabel htmlFor="zoom">Z:</FieldLabel>
          <Spin id="zoom" value="240%" w={56} align="center" />
        </ZoomField>
        <ZoomField>
          <FieldLabel htmlFor="rotation">R:</FieldLabel>
          <Spin id="rotation" value="0.00°" w={65} align="center" />
        </ZoomField>
      </StatusBar>
    </Shell>
  );
}
